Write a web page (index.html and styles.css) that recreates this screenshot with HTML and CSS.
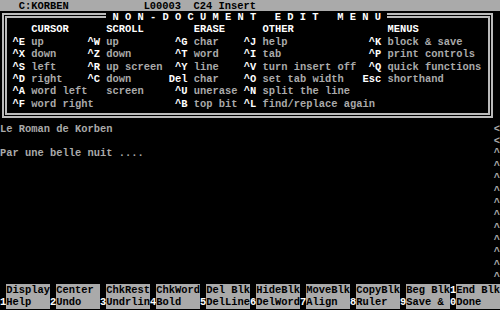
FILE: index.html
```html
<!DOCTYPE HTML>
<html>

<head>
    <link rel="stylesheet" href="styles.css">
    <title>WordStar - KORBEN</title>
</head>

<body>
    <div class="screen">
        <div class="status">   C:KORBEN            L00003  C24 Insert</div>

        <div class="menu-box">
            <div class="menu-title"> N O N - D O C U M E N T   E D I T   M E N U </div>
            <div class="menu-grid">
                <div class="head">CURSOR</div>
                <div class="head">SCROLL</div>
                <div class="head">ERASE</div>
                <div class="head">OTHER</div>
                <div class="head">MENUS</div>

                <div class="item"><span class="k">^E</span><span class="d">up</span></div>
                <div class="item"><span class="k">^W</span><span class="d">up</span></div>
                <div class="item"><span class="k">^G</span><span class="d">char</span></div>
                <div class="item"><span class="k">^J</span><span class="d">help</span></div>
                <div class="item"><span class="k">^K</span><span class="d">block &amp; save</span></div>

                <div class="item"><span class="k">^X</span><span class="d">down</span></div>
                <div class="item"><span class="k">^Z</span><span class="d">down</span></div>
                <div class="item"><span class="k">^T</span><span class="d">word</span></div>
                <div class="item"><span class="k">^I</span><span class="d">tab</span></div>
                <div class="item"><span class="k">^P</span><span class="d">print controls</span></div>

                <div class="item"><span class="k">^S</span><span class="d">left</span></div>
                <div class="item"><span class="k">^R</span><span class="d">up screen</span></div>
                <div class="item"><span class="k">^Y</span><span class="d">line</span></div>
                <div class="item"><span class="k">^V</span><span class="d">turn insert off</span></div>
                <div class="item"><span class="k">^Q</span><span class="d">quick functions</span></div>

                <div class="item"><span class="k">^D</span><span class="d">right</span></div>
                <div class="item"><span class="k">^C</span><span class="d">down</span></div>
                <div class="item"><span class="k">Del</span><span class="d">char</span></div>
                <div class="item"><span class="k">^O</span><span class="d">set tab width</span></div>
                <div class="item"><span class="k">Esc</span><span class="d">shorthand</span></div>

                <div class="item"><span class="k">^A</span><span class="d">word left</span></div>
                <div class="item"><span class="k"></span><span class="d">screen</span></div>
                <div class="item"><span class="k">^U</span><span class="d">unerase</span></div>
                <div class="item"><span class="k">^N</span><span class="d">split the line</span></div>
                <div class="item"></div>

                <div class="item"><span class="k">^F</span><span class="d">word right</span></div>
                <div class="item"></div>
                <div class="item"><span class="k">^B</span><span class="d">top bit</span></div>
                <div class="item"><span class="k">^L</span><span class="d">find/replace again</span></div>
                <div class="item"></div>
            </div>
        </div>

        <div class="doc">
            <div class="line"><span class="txt">Le Roman de Korben</span><span class="flag">&lt;</span></div>
            <div class="line"><span class="txt"></span><span class="flag">&lt;</span></div>
            <div class="line"><span class="txt">Par une belle nuit ....</span><span class="flag">^</span></div>
            <div class="line"><span class="txt"></span><span class="flag">^</span></div>
            <div class="line"><span class="txt"></span><span class="flag">^</span></div>
            <div class="line"><span class="txt"></span><span class="flag">^</span></div>
            <div class="line"><span class="txt"></span><span class="flag">^</span></div>
            <div class="line"><span class="txt"></span><span class="flag">^</span></div>
            <div class="line"><span class="txt"></span><span class="flag">^</span></div>
            <div class="line"><span class="txt"></span><span class="flag">^</span></div>
            <div class="line"><span class="txt"></span><span class="flag">^</span></div>
            <div class="line"><span class="txt"></span><span class="flag">^</span></div>
            <div class="line"><span class="txt"></span><span class="flag">^</span></div>
        </div>

        <div class="fkeys">
            <div class="key"><span class="n"></span><span class="l">Display</span></div>
            <div class="key"><span class="n"></span><span class="l">Center</span></div>
            <div class="key"><span class="n"></span><span class="l">ChkRest</span></div>
            <div class="key"><span class="n"></span><span class="l">ChkWord</span></div>
            <div class="key"><span class="n"></span><span class="l">Del Blk</span></div>
            <div class="key"><span class="n"></span><span class="l">HideBlk</span></div>
            <div class="key"><span class="n"></span><span class="l">MoveBlk</span></div>
            <div class="key"><span class="n"></span><span class="l">CopyBlk</span></div>
            <div class="key"><span class="n"></span><span class="l">Beg Blk</span></div>
            <div class="key"><span class="n">1</span><span class="l">End Blk</span></div>

            <div class="key"><span class="n">1</span><span class="l">Help</span></div>
            <div class="key"><span class="n">2</span><span class="l">Undo</span></div>
            <div class="key"><span class="n">3</span><span class="l">Undrlin</span></div>
            <div class="key"><span class="n">4</span><span class="l">Bold</span></div>
            <div class="key"><span class="n">5</span><span class="l">DelLine</span></div>
            <div class="key"><span class="n">6</span><span class="l">DelWord</span></div>
            <div class="key"><span class="n">7</span><span class="l">Align</span></div>
            <div class="key"><span class="n">8</span><span class="l">Ruler</span></div>
            <div class="key"><span class="n">9</span><span class="l">Save &amp;</span></div>
            <div class="key"><span class="n">0</span><span class="l">Done</span></div>
        </div>
    </div>
</body>

</html>
```

FILE: styles.css
```css
html,
body {
    margin: 0;
    background-color: #000;
}
.screen {
    width: 500px;
    height: 310px;
    overflow: hidden;
    font: bold 10.4167px/12.4px "Liberation Mono", "DejaVu Sans Mono", monospace;
    color: #aaa;
}
.status {
    height: 11px;
    margin-bottom: 1.4px;
    background-color: #aaa;
    color: #000;
    white-space: pre;
}

/* menu box, double line frame */
.menu-box {
    position: relative;
    height: 86.8px;
    margin: 1.6px 7.5px 5px 2px;
    padding: 5.8px 0 2.4px 0;
    border: 5px double #bbb;
}
.menu-title {
    position: absolute;
    top: -6.6px;
    left: 99.25px;
    background-color: #000;
    color: #fff;
    white-space: pre;
}
.menu-grid {
    display: grid;
    grid-template-columns: 75px 87.5px 68.75px 125px 125px;
    grid-auto-rows: 12.4px;
    margin-left: -0.75px;
}
.head {
    padding-left: 25px;
    color: #fff;
}
.item {
    display: flex;
    white-space: pre;
}
.k {
    flex-shrink: 0;
    width: 18.75px;
    text-align: right;
    color: #fff;
}
.d {
    flex-shrink: 0;
    margin-left: 6.25px;
}

/* document area */
.doc {
    height: 161.2px;
}
.line {
    display: flex;
    height: 12.4px;
    white-space: pre;
}
.txt {
    flex: 1;
}
.flag {
    width: 6.25px;
}

/* function keys */
.fkeys {
    display: grid;
    grid-template-columns: repeat(10, 50px);
    grid-auto-rows: 12.4px;
}
.key {
    display: flex;
}
.n {
    flex-shrink: 0;
    width: 6.25px;
    color: #fff;
}
.l {
    flex: 1;
    background-color: #aaa;
    color: #000;
    white-space: pre;
}
```
